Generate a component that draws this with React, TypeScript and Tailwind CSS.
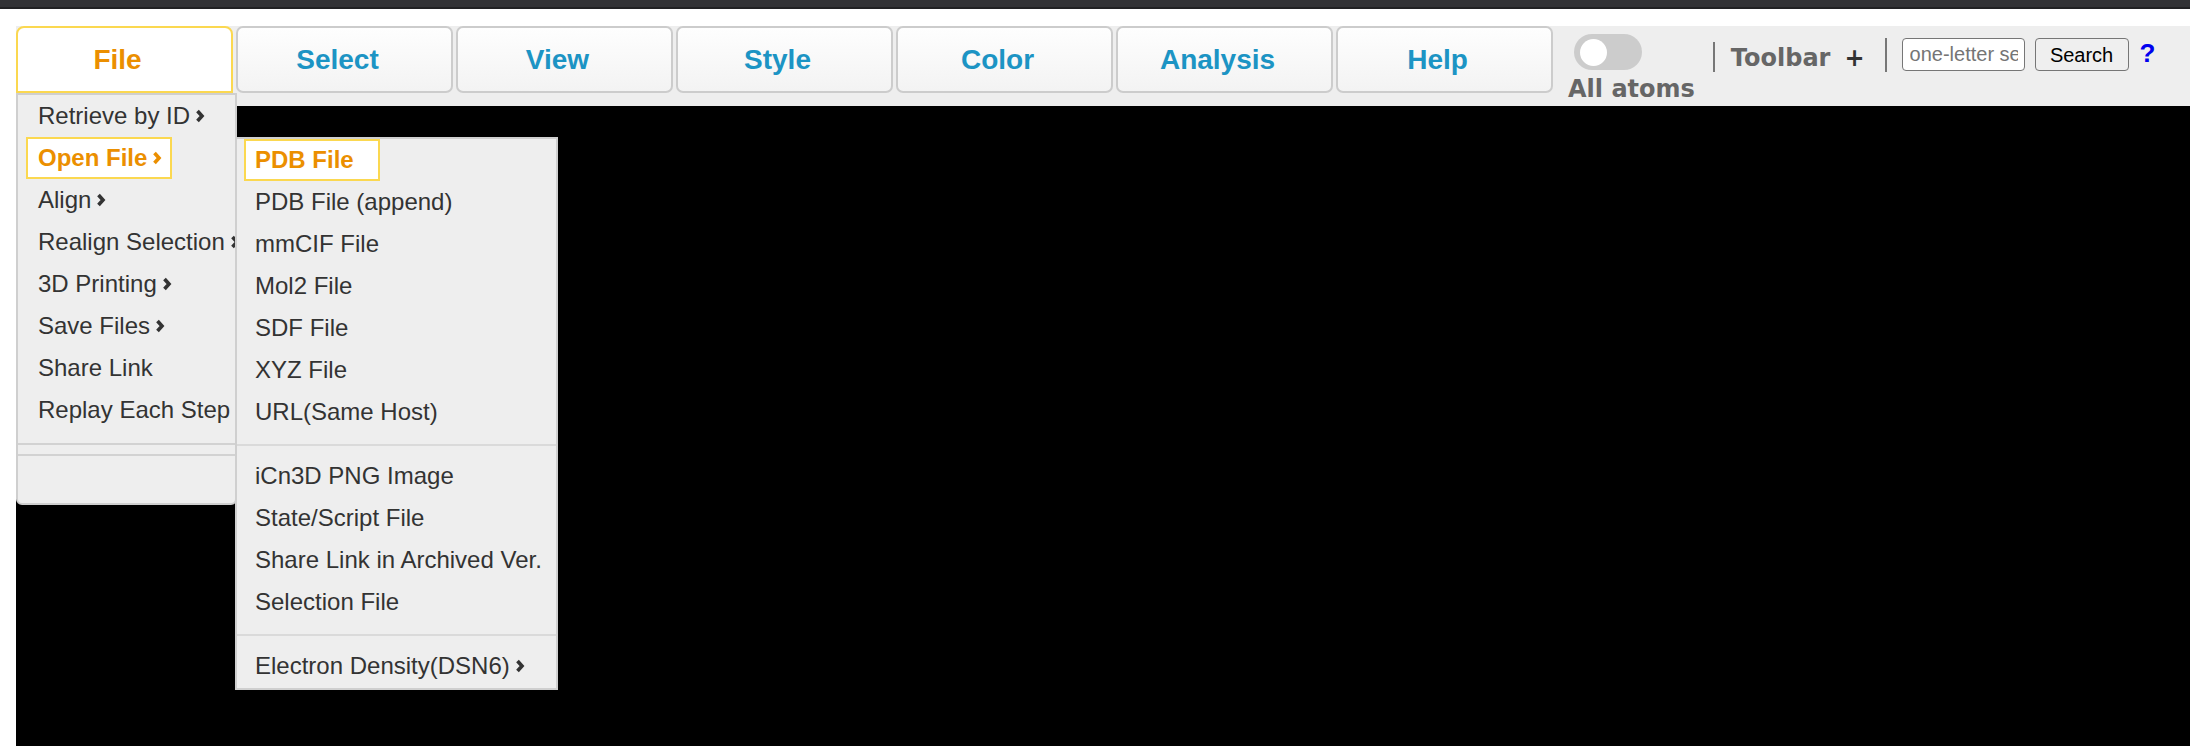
import React from "react";

function Chevron({ className = "" }: { className?: string }) {
  return (
    <svg width="10" height="14" viewBox="0 0 10 14" className={`ml-[5px] shrink-0 ${className}`}>
      <polyline points="2.5,2 7,7 2.5,12" fill="none" stroke="currentColor" strokeWidth="3.6" strokeLinejoin="miter" />
    </svg>
  );
}

const tabs = ["File", "Select", "View", "Style", "Color", "Analysis", "Help"];

function Tab({ label, active }: { label: string; active?: boolean }) {
  if (active) {
    return (
      <div className="box-border w-[217px] h-[67px] flex items-center justify-center pr-[14px] pt-[1px] border-2 border-[#fbd850] bg-white rounded-t-[8px] text-[28px] font-bold text-[#eb8f00]">
        {label}
      </div>
    );
  }
  return (
    <div className="box-border w-[217px] h-[67px] flex items-center justify-center pr-[14px] pt-[1px] border-2 border-[#cccccc] rounded-[7px] bg-linear-to-b from-[#fefefe] to-[#f3f3f3] text-[28px] font-bold text-[#1c94c4]">
      {label}
    </div>
  );
}

function FileItem({ label, chevron }: { label: string; chevron?: boolean }) {
  return (
    <div className="h-[42px] flex items-center pl-[20px] whitespace-nowrap text-[24px] text-[#333333]">
      {label}
      {chevron && <Chevron className="text-[#333333]" />}
    </div>
  );
}

function SubItem({ label, chevron }: { label: string; chevron?: boolean }) {
  return (
    <div className="h-[42px] flex items-center pl-[18px] whitespace-nowrap text-[24px] text-[#333333]">
      {label}
      {chevron && <Chevron className="text-[#333333]" />}
    </div>
  );
}

export default function App() {
  return (
    <div className="w-[2190px] h-[746px] overflow-hidden bg-white font-['Liberation_Sans',Arial,sans-serif]">
      <div className="h-[7px] bg-[#333336]" />
      <div className="h-[2px] bg-[#222224]" />
      <div className="h-[17px] bg-white" />
      <div className="ml-[16px] relative">
        {/* toolbar */}
        <div className="h-[80px] bg-[#eeeeee] flex items-start">
          <div className="flex gap-[3px]">
            {tabs.map((t, i) => (
              <Tab key={t} label={t} active={i === 0} />
            ))}
          </div>
          <div className="ml-[15px] flex flex-col items-start">
            <div className="ml-[6px] mt-[8px] w-[68px] h-[36px] rounded-full bg-[#cccccc] flex items-center pl-[6px]">
              <div className="w-[27px] h-[27px] rounded-full bg-white" />
            </div>
            <div className="mt-[5px] leading-[28px] text-[24px] font-bold text-[#666666] font-['DejaVu_Sans',Verdana,sans-serif] whitespace-nowrap">
              All atoms
            </div>
          </div>
          <div className="ml-[18px] mt-[16px] w-[2px] h-[30px] bg-[#777777]" />
          <div className="ml-[16px] mt-[18px] leading-[28px] text-[24px] font-bold text-[#666666] font-['DejaVu_Sans',Verdana,sans-serif]">
            Toolbar
          </div>
          <div className="ml-[14px] mt-[18px] leading-[28px] text-[24px] font-bold text-[#333333] font-['DejaVu_Sans',Verdana,sans-serif]">
            +
          </div>
          <div className="ml-[20px] mt-[12px] w-[2px] h-[34px] bg-[#777777]" />
          <input
            type="text"
            placeholder="one-letter seq."
            className="ml-[15px] mt-[12px] box-border w-[123px] h-[33px] border-[1.5px] border-[#767676] rounded-[4px] bg-white pl-[7px] pr-[6px] text-[20px] text-black placeholder:text-[#757575] outline-none"
          />
          <button className="ml-[10px] mt-[12px] box-border w-[94px] h-[33px] border-[1.5px] border-[#767676] rounded-[4px] bg-[#efefef] text-[20px] text-black flex items-center justify-center">
            Search
          </button>
          <div className="ml-[11px] mt-[12px] leading-[30px] text-[26px] font-bold text-[#0000ee]">?</div>
        </div>
        {/* canvas */}
        <div className="h-[640px] bg-black" />

        {/* File menu */}
        <div className="absolute left-0 top-[67px] box-border w-[221px] h-[412px] border-2 border-[#cfcfcf] rounded-b-[6px] bg-[#eeeeee] z-10">
          <FileItem label="Retrieve by ID" chevron />
          <div className="ml-[8px] box-border h-[42px] w-fit flex items-center border-2 border-[#fbd850] bg-white pl-[10px] pr-[8px] text-[24px] font-bold text-[#eb8f00] whitespace-nowrap">
            Open File
            <Chevron className="text-[#eb8f00]" />
          </div>
          <FileItem label="Align" chevron />
          <FileItem label="Realign Selection" chevron />
          <FileItem label="3D Printing" chevron />
          <FileItem label="Save Files" chevron />
          <FileItem label="Share Link" />
          <FileItem label="Replay Each Step" />
          <div className="mt-[12px] h-[2px] bg-[#d2d2d2]" />
          <div className="mt-[9px] h-[2px] bg-[#d2d2d2]" />
        </div>

        {/* Open File submenu */}
        <div className="absolute left-[219px] top-[111px] box-border w-[323px] h-[553px] border-2 border-[#cfcfcf] bg-[#eeeeee] z-20">
          <div className="ml-[7px] box-border h-[42px] w-[136px] flex items-center border-2 border-[#fbd850] bg-white pl-[9px] text-[24px] font-bold text-[#eb8f00] whitespace-nowrap">
            PDB File
          </div>
          <SubItem label="PDB File (append)" />
          <SubItem label="mmCIF File" />
          <SubItem label="Mol2 File" />
          <SubItem label="SDF File" />
          <SubItem label="XYZ File" />
          <SubItem label="URL(Same Host)" />
          <div className="mt-[11px] mb-[9px] h-[2px] bg-[#dadada]" />
          <SubItem label="iCn3D PNG Image" />
          <SubItem label="State/Script File" />
          <SubItem label="Share Link in Archived Ver." />
          <SubItem label="Selection File" />
          <div className="mt-[11px] mb-[9px] h-[2px] bg-[#dadada]" />
          <SubItem label="Electron Density(DSN6)" chevron />
        </div>
      </div>
    </div>
  );
}
